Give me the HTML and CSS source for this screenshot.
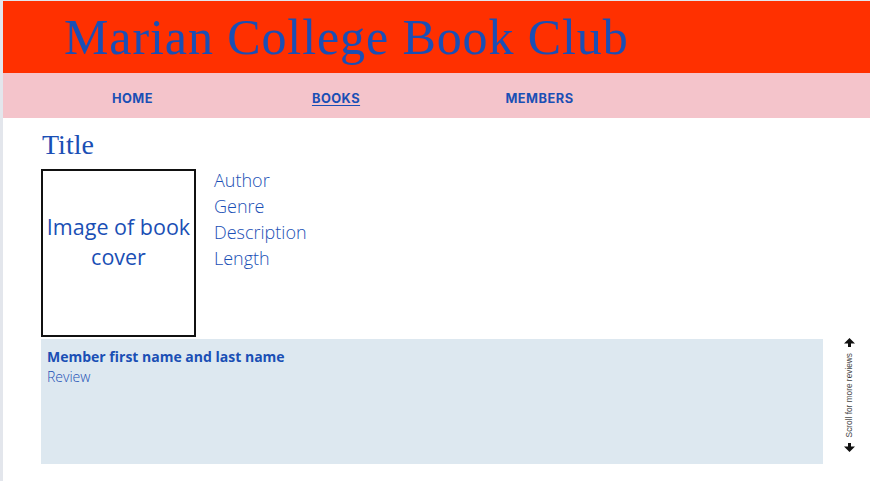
FILE: index.html
```html
<!DOCTYPE html>
<html>
<head>
<meta charset="utf-8">
<link rel="stylesheet" href="styles.css">
</head>
<body>
<div class="page">
  <header class="masthead">
    <h1 class="site-title">Marian College Book Club</h1>
  </header>
  <nav class="nav">
    <a class="nav-link" href="#">HOME</a>
    <a class="nav-link active" href="#">BOOKS</a>
    <a class="nav-link" href="#">MEMBERS</a>
  </nav>
  <main class="content">
    <h2 class="book-title">Title</h2>
    <div class="book">
      <div class="cover">Image of book cover</div>
      <ul class="meta">
        <li>Author</li>
        <li>Genre</li>
        <li>Description</li>
        <li>Length</li>
      </ul>
    </div>
    <div class="reviews">
      <div class="review">
        <div class="reviewer">Member first name and last name</div>
        <div class="review-text">Review</div>
      </div>
      <div class="scroll-hint">
        <svg class="arrow" width="11" height="9" viewBox="0 0 11 9"><path d="M5.5 0 L11 5.5 L7 5.5 L7 9 L4 9 L4 5.5 L0 5.5 Z" fill="#111"/></svg>
        <span class="scroll-text">Scroll for more reviews</span>
        <svg class="arrow" width="11" height="9" viewBox="0 0 11 9"><path d="M5.5 9 L11 3.5 L7 3.5 L7 0 L4 0 L4 3.5 L0 3.5 Z" fill="#111"/></svg>
      </div>
    </div>
  </main>
</div>
</body>
</html>
```
FILE: styles.css
```css
html, body {
  margin: 0;
  padding: 0;
}
body {
  background: #e3e6ec;
  height: 481px;
  overflow: hidden;
}
.page {
  margin: 1px 0 0 3px;
  background: #fff;
  height: 480px;
}
.masthead {
  background: #ff3000;
  height: 72px;
  padding-left: 61px;
  box-sizing: border-box;
}
.site-title {
  margin: 0;
  font-family: "Liberation Serif", "DejaVu Serif", serif;
  font-weight: 400;
  font-size: 50px;
  line-height: 72px;
  color: #1a4fb5;
  letter-spacing: 0.9px;
}
.nav {
  background: #f4c4cb;
  height: 45px;
  box-sizing: border-box;
  padding-top: 6px;
  display: grid;
  grid-template-columns: repeat(3, 203.5px);
  padding-left: 27.75px;
  align-items: center;
}
.nav-link {
  text-align: center;
  font-family: Inter, "Liberation Sans", sans-serif;
  font-weight: 700;
  font-size: 12.8px;
  letter-spacing: 0.5px;
  color: #1a4fb5;
  text-decoration: none;
}
.nav-link.active {
  text-decoration: underline;
  text-underline-offset: 2px;
}
.content {
  padding: 10px 0 0 38px;
}
.book-title {
  margin: 0;
  font-family: "Liberation Serif", "DejaVu Serif", serif;
  font-weight: 400;
  font-size: 28px;
  line-height: 34px;
  color: #1a4fb5;
  padding-left: 1px;
}
.book {
  display: flex;
  gap: 18px;
  margin-top: 7px;
}
.cover {
  width: 155px;
  height: 168px;
  box-sizing: border-box;
  border: 2px solid #111;
  display: flex;
  align-items: center;
  justify-content: center;
  text-align: center;
  font-family: "Open Sans", sans-serif;
  font-size: 21.5px;
  line-height: 30px;
  color: #1a4fb5;
  padding: 0 1px 22px;
}
.meta {
  list-style: none;
  margin: -2px 0 0;
  padding: 0;
  font-family: "Open Sans", sans-serif;
  font-weight: 300;
  font-size: 18px;
  line-height: 26px;
  color: #1a4fb5;
}
.reviews {
  display: flex;
  margin-top: 2px;
  align-items: flex-start;
}
.review {
  width: 782px;
  height: 125px;
  background: #dde8f0;
  padding: 8px 6px;
  box-sizing: border-box;
  font-family: "Open Sans", sans-serif;
  font-size: 14px;
  color: #1a4fb5;
}
.reviewer {
  font-weight: 700;
  line-height: 20px;
}
.review-text {
  font-weight: 300;
  line-height: 20px;
}
.scroll-hint {
  width: 14px;
  margin-left: 19px;
  margin-top: -1px;
  display: flex;
  flex-direction: column;
  align-items: center;
  gap: 6px;
}
.arrow {
  display: block;
}
.scroll-text {
  writing-mode: vertical-rl;
  transform: rotate(180deg);
  font-family: "Liberation Sans", sans-serif;
  font-size: 8.3px;
  color: #444;
  line-height: 10px;
}
```
